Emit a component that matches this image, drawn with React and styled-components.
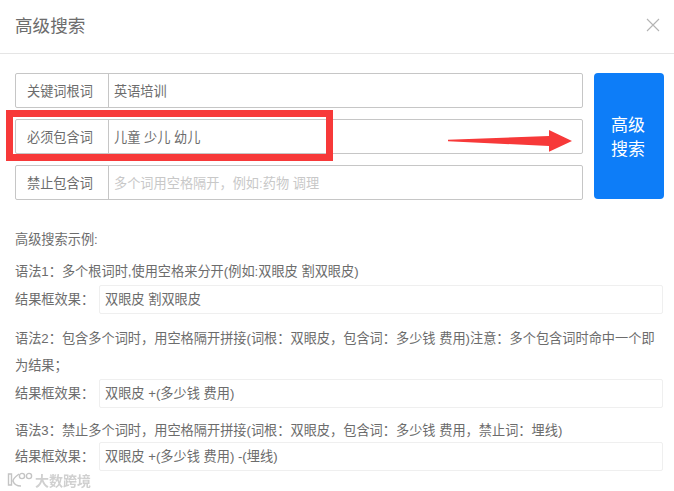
import styled, { createGlobalStyle } from "styled-components";

const GlobalStyle = createGlobalStyle`
	html, body {
		margin: 0;
		padding: 0;
		background: #ffffff;
	}
	body {
		font-family: "Liberation Sans", "Noto Sans CJK SC", sans-serif;
		color: #6c6c6c;
	}
`;

const searchFields = [
	{ label: "关键词根词", value: "英语培训" },
	{ label: "必须包含词", value: "儿童 少儿 幼儿" },
	{ label: "禁止包含词", placeholder: "多个词用空格隔开，例如:药物 调理" },
];

export default function App() {
	return (
		<Modal>
			<GlobalStyle />
			<Header>
				<Title>高级搜索</Title>
				<CloseIcon viewBox="0 0 14 14">
					<path d="M1 1 L13 13 M13 1 L1 13" />
				</CloseIcon>
			</Header>

			<SearchArea>
				<Fields>
					{searchFields.map((f) => (
						<FieldRow key={f.label}>
							<FieldLabel>{f.label}</FieldLabel>
							<FieldValue $empty={!f.value}>{f.value || f.placeholder}</FieldValue>
						</FieldRow>
					))}
				</Fields>
				<SearchButton>
					高级
					<br />
					搜索
				</SearchButton>
				<Highlight />
				<Arrow viewBox="0 0 125 24">
					<path d="M0 9.8 L101 6 L101 0 L124 11 L101 21.7 L101 16 L0 11.2 Z" />
				</Arrow>
			</SearchArea>

			<Examples>
				<Heading>高级搜索示例:</Heading>

				<Syntax>语法1：多个根词时,使用空格来分开(例如:双眼皮 割双眼皮)</Syntax>
				<ResultRow>
					<ResultLabel>结果框效果：</ResultLabel>
					<ResultBox>双眼皮 割双眼皮</ResultBox>
				</ResultRow>

				<Syntax $gap={11}>
					语法2：包含多个词时，用空格隔开拼接(词根：双眼皮，包含词：多少钱 费用)注意：多个包含词时命中一个即为结果；
				</Syntax>
				<ResultRow>
					<ResultLabel>结果框效果：</ResultLabel>
					<ResultBox>双眼皮 +(多少钱 费用)</ResultBox>
				</ResultRow>

				<Syntax $gap={9} $tight>
					语法3：禁止多个词时，用空格隔开拼接(词根：双眼皮，包含词：多少钱 费用，禁止词：埋线)
				</Syntax>
				<ResultRow>
					<ResultLabel>结果框效果：</ResultLabel>
					<ResultBox>双眼皮 +(多少钱 费用) -(埋线)</ResultBox>
				</ResultRow>
			</Examples>

			<Watermark>
				<WatermarkLogo viewBox="0 0 26 16">
					<path d="M1.5 2 L4.5 2 L4.5 13 L1.5 13 Z M12 2 C8 5 6 8 6 9 C7 12 10 14 14 14" />
					<circle cx="15" cy="4" r="2.6" />
					<circle cx="22" cy="4" r="2.6" />
				</WatermarkLogo>
				大数跨境
			</Watermark>
		</Modal>
	);
}

const Modal = styled.div`
	position: relative;
	width: 674px;
	height: 491px;
	overflow: hidden;
	background: #ffffff;
`;

const Header = styled.div`
	height: 49px;
	padding: 0 15px 4px;
	border-bottom: 1px solid #e5e5e5;
	display: flex;
	align-items: center;
	justify-content: space-between;
`;

const Title = styled.h1`
	margin: 0;
	font-size: 17.6px;
	font-weight: 400;
	color: #6c6c6c;
`;

const CloseIcon = styled.svg`
	width: 14px;
	height: 14px;
	margin-right: -1px;
	fill: none;
	stroke: #b4b4b4;
	stroke-width: 1.1;
`;

const SearchArea = styled.div`
	position: relative;
	display: flex;
	gap: 11px;
	padding: 19px 10px 0 15px;
`;

const Fields = styled.div`
	width: 568px;
	display: flex;
	flex-direction: column;
	gap: 11px;
`;

const FieldRow = styled.div`
	box-sizing: border-box;
	height: 35px;
	display: flex;
	border: 1px solid #c6c6c6;
	border-radius: 2px;
	font-size: 13.2px;
`;

const FieldLabel = styled.div`
	width: 93px;
	flex: none;
	box-sizing: border-box;
	padding-left: 11px;
	border-right: 1px solid #c6c6c6;
	display: flex;
	align-items: center;
`;

const FieldValue = styled.div`
	flex: 1;
	display: flex;
	align-items: center;
	padding-left: 5px;
	color: ${(p) => (p.$empty ? "#c8c8c8" : "#6c6c6c")};
`;

const SearchButton = styled.button`
	width: 70px;
	height: 126px;
	border: none;
	border-radius: 4px;
	background: #0d7df8;
	color: #ffffff;
	font-family: inherit;
	font-size: 17px;
	line-height: 24px;
	padding: 3px 2px 0 0;
`;

const Highlight = styled.div`
	position: absolute;
	left: 6px;
	top: 56px;
	width: 327px;
	height: 51px;
	box-sizing: border-box;
	border: 7px solid #f73939;
`;

const Arrow = styled.svg`
	position: absolute;
	left: 448px;
	top: 76px;
	width: 125px;
	height: 24px;
	fill: #f73939;
`;

const Examples = styled.div`
	padding: 26px 11px 0 15px;
	font-size: 13.2px;
	line-height: 27px;
`;

const Heading = styled.div`
	margin-bottom: 5px;
`;

const Syntax = styled.div`
	margin-top: ${(p) => p.$gap || 0}px;
	margin-bottom: ${(p) => (p.$tight ? -2 : 0)}px;
`;

const ResultRow = styled.div`
	display: flex;
	align-items: center;
`;

const ResultLabel = styled.div`
	width: 84px;
	flex: none;
`;

const ResultBox = styled.div`
	flex: 1;
	box-sizing: border-box;
	height: 29px;
	border: 1px solid #efefef;
	border-radius: 2px;
	padding-left: 5px;
	display: flex;
	align-items: center;
`;

const Watermark = styled.div`
	position: absolute;
	left: 7px;
	top: 470px;
	display: flex;
	align-items: center;
	gap: 2px;
	font-size: 14px;
	font-weight: 700;
	color: #d0d0d0;
	filter: blur(0.7px);
`;

const WatermarkLogo = styled.svg`
	width: 26px;
	height: 16px;
	fill: none;
	stroke: #c4c4c4;
	stroke-width: 1.4;
`;
